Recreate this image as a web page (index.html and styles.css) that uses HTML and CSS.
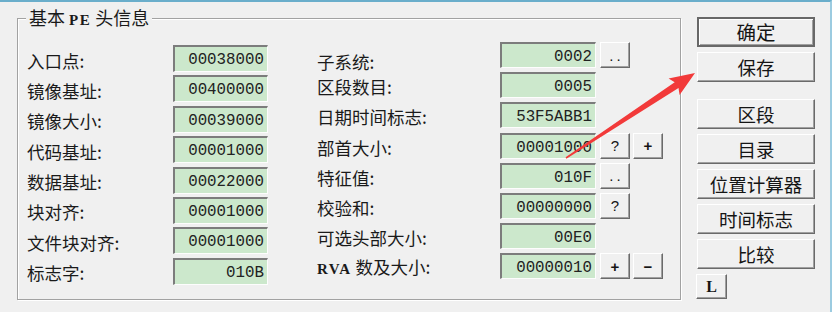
FILE: index.html
```html
<!DOCTYPE html>
<html lang="zh-CN">
<head>
    <meta charset="UTF-8">
    <title>基本 PE 头信息</title>
    <link rel="stylesheet" href="styles.css">
</head>
<body>
    <div class="window">
        <fieldset class="pe-group">
            <legend>基本 <span class="latin">PE</span> 头信息</legend>
            <div class="cols">
                <div class="col col-left">
                    <div class="row"><span class="lbl">入口点:</span><span class="val">00038000</span></div>
                    <div class="row"><span class="lbl">镜像基址:</span><span class="val">00400000</span></div>
                    <div class="row"><span class="lbl">镜像大小:</span><span class="val">00039000</span></div>
                    <div class="row"><span class="lbl">代码基址:</span><span class="val">00001000</span></div>
                    <div class="row"><span class="lbl">数据基址:</span><span class="val">00022000</span></div>
                    <div class="row"><span class="lbl">块对齐:</span><span class="val">00001000</span></div>
                    <div class="row"><span class="lbl">文件块对齐:</span><span class="val">00001000</span></div>
                    <div class="row"><span class="lbl">标志字:</span><span class="val">010B</span></div>
                </div>
                <div class="col col-right">
                    <div class="row first"><span class="lbl">子系统:</span><span class="val">0002</span><button class="mini dots">..</button></div>
                    <div class="row"><span class="lbl">区段数目:</span><span class="val">0005</span></div>
                    <div class="row"><span class="lbl">日期时间标志:</span><span class="val">53F5ABB1</span></div>
                    <div class="row"><span class="lbl">部首大小:</span><span class="val">00001000</span><button class="mini">?</button><button class="mini plus">+</button></div>
                    <div class="row"><span class="lbl">特征值:</span><span class="val">010F</span><button class="mini dots">..</button></div>
                    <div class="row"><span class="lbl">校验和:</span><span class="val">00000000</span><button class="mini">?</button></div>
                    <div class="row"><span class="lbl">可选头部大小:</span><span class="val">00E0</span></div>
                    <div class="row"><span class="lbl"><span class="latin">RVA</span> 数及大小:</span><span class="val">00000010</span><button class="mini plus">+</button><button class="mini plus">&minus;</button></div>
                </div>
            </div>
        </fieldset>

        <div class="actions">
            <button class="btn default">确定</button>
            <button class="btn">保存</button>
            <button class="btn spaced">区段</button>
            <button class="btn">目录</button>
            <button class="btn">位置计算器</button>
            <button class="btn">时间标志</button>
            <button class="btn">比较</button>
            <button class="btn small">L</button>
        </div>
    </div>

    <!-- 标注箭头 -->
    <svg class="arrow" width="832" height="312" viewBox="0 0 832 312">
        <polygon points="566.4,158.7 678.5,88 679.6,95.1 695,73 668.6,78.4 674.7,82.2 565.6,157.3" fill="#f23a3a"/>
    </svg>
</body>
</html>
```

FILE: styles.css
```css
html, body {
    margin: 0;
    padding: 0;
}
body {
    width: 832px;
    height: 312px;
    box-sizing: border-box;
    overflow: hidden;
    background-color: #f0f0f0;
    border-top: 2px solid #6aaecb;
    border-right: 2px solid #9ccbe0;
    font-family: "Noto Sans CJK SC", "Noto Sans", sans-serif;
    color: #1a1a1a;
    position: relative;
}
.window {
    display: flex;
    align-items: flex-start;
}

/* 分组框 */
.pe-group {
    margin: 5px 0 0 17px;
    padding: 12px 0 0 9px;
    width: 664px;
    height: 293px;
    box-sizing: border-box;
    border: 1px solid #a2a2a2;
    box-shadow: inset 1px 1px 0 #ffffff, 1px 1px 0 #ffffff;
    min-width: 0;
}
.pe-group legend {
    margin-left: -1px;
    padding: 0 3px;
    font-size: 18px;
    line-height: 20px;
    background-color: #f0f0f0;
}
.latin {
    font-family: "Liberation Serif", serif;
    font-weight: bold;
    font-size: 15px;
    letter-spacing: 1.5px;
}
.cols {
    display: flex;
}
.col {
    display: flex;
    flex-direction: column;
}
.col-left {
    margin-top: 3px;
    gap: 3.4px;
}
.col-right {
    margin-left: 49px;
    gap: 4.2px;
}
.row {
    display: flex;
    align-items: center;
    height: 27px;
}
.col-right .row {
    height: 26px;
}
.lbl {
    font-size: 17.5px;
    line-height: 20px;
    padding-top: 4px;
    white-space: nowrap;
}
.col-left .lbl {
    width: 146px;
}
.col-right .lbl {
    width: 183px;
}
.col-right .row.first .lbl {
    padding-top: 13px;
}
.val {
    box-sizing: border-box;
    width: 95px;
    height: 100%;
    background-color: #cce8cc;
    border-top: 2px solid #7c7c7c;
    border-left: 2px solid #7c7c7c;
    border-right: 1px solid #fdfdfd;
    border-bottom: 1px solid #fdfdfd;
    font-family: "Liberation Mono", monospace;
    font-size: 15.8px;
    line-height: 24px;
    padding: 1px 3px 0 0;
    text-align: right;
    color: #222222;
}
.col-right .val {
    width: 96px;
}

/* 按钮 */
button {
    font-family: inherit;
    color: #151515;
    background-color: #f0f0f0;
    cursor: pointer;
    padding: 0;
}
.mini {
    width: 30px;
    height: 26px;
    margin-left: 4px;
    border: 1px solid;
    border-color: #ffffff #6a6a6a #6a6a6a #ffffff;
    box-shadow: inset -1px -1px 0 #a0a0a0;
    font-family: "Liberation Sans", sans-serif;
    font-size: 15px;
    line-height: 1;
}
.mini + .mini {
    margin-left: 3px;
}
.mini.plus {
    font-weight: bold;
}
.mini.dots {
    letter-spacing: 3px;
    padding-left: 3px;
}
.actions {
    display: flex;
    flex-direction: column;
    gap: 5px;
    margin: 15px 0 0 16px;
}
.btn {
    width: 118px;
    height: 30px;
    border: 1px solid;
    border-color: #ffffff #6a6a6a #6a6a6a #ffffff;
    box-shadow: inset -1px -1px 0 #a0a0a0;
    font-size: 18.5px;
    line-height: 1;
}
.btn.default {
    border: 2px solid #686868;
    box-shadow: inset 1px 1px 0 #ffffff, inset -1px -1px 0 #a0a0a0;
    font-size: 19.5px;
}
.btn.spaced {
    margin-top: 12px;
}
.btn.small {
    width: 31px;
    height: 25px;
    margin-left: -1px;
    font-family: "Liberation Serif", serif;
    font-weight: bold;
    font-size: 16px;
}
.arrow {
    position: absolute;
    left: 0;
    top: -2px;
    pointer-events: none;
}
```
